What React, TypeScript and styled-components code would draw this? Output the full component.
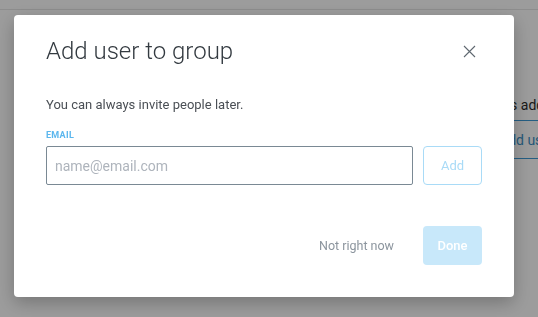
import styled, { createGlobalStyle } from 'styled-components';

const GlobalStyle = createGlobalStyle`
  html, body {
    margin: 0;
    padding: 0;
    background: #ffffff;
    font-family: 'Roboto', 'Noto Sans', sans-serif;
    overflow: hidden;
  }
  * {
    box-sizing: border-box;
  }
`;

function CloseIcon() {
  return (
    <svg width="13" height="13" viewBox="0 0 13 13" fill="none">
      <path d="M1 1L12 12M12 1L1 12" stroke="#5f6870" strokeWidth="1.1" />
    </svg>
  );
}

function App() {
  return (
    <>
      <GlobalStyle />
      <Page>
        <TopBar />
        <Content>
          <Summary>users added</Summary>
          <LinkRow>
            <TextLink>Add users</TextLink>
          </LinkRow>
        </Content>
      </Page>

      <Overlay>
        <Modal role="dialog" aria-labelledby="add-user-title">
          <Header>
            <Title id="add-user-title">Add user to group</Title>
            <CloseButton aria-label="Close">
              <CloseIcon />
            </CloseButton>
          </Header>

          <Hint>You can always invite people later.</Hint>

          <Field>
            <Label htmlFor="email">Email</Label>
            <InputRow>
              <EmailInput id="email" placeholder="name@email.com" />
              <OutlineButton disabled>Add</OutlineButton>
            </InputRow>
          </Field>

          <Footer>
            <GhostButton>Not right now</GhostButton>
            <PrimaryButton disabled>Done</PrimaryButton>
          </Footer>
        </Modal>
      </Overlay>
    </>
  );
}

export default App;

// styles
const Page = styled.div`
  width: 538px;
  height: 317px;
  background: #ffffff;
  overflow: hidden;
`;

const TopBar = styled.div`
  height: 10px;
  border-bottom: 1px solid #e6e6e6;
`;

const Content = styled.div`
  display: flex;
  flex-direction: column;
  padding: 86px 0 0 483px;
`;

const Summary = styled.div`
  font-size: 14px;
  line-height: 18px;
  color: #2c2c2c;
  white-space: nowrap;
  height: 25px;
  border-bottom: 1px solid #3d9ad6;
`;

const LinkRow = styled.div`
  display: flex;
  align-items: center;
  height: 38px;
  padding-left: 16px;
  border-bottom: 1px solid #3d9ad6;
`;

const TextLink = styled.span`
  font-size: 14px;
  color: #3d8fc4;
  white-space: nowrap;
`;

const Overlay = styled.div`
  position: fixed;
  inset: 0;
  background: rgba(0, 0, 0, 0.39);
  display: flex;
  align-items: flex-start;
  padding: 15px 0 0 14px;
`;

const Modal = styled.div`
  width: 500px;
  height: 282px;
  background: #ffffff;
  border-radius: 4px;
  box-shadow: 0 6px 18px rgba(0, 0, 0, 0.25);
  display: flex;
  flex-direction: column;
  padding: 20px 32px 0 32px;
`;

const Header = styled.div`
  display: flex;
  align-items: center;
  justify-content: space-between;
  height: 32px;
`;

const Title = styled.h2`
  margin: 0;
  font-size: 24px;
  font-weight: 300;
  color: #333a40;
`;

const CloseButton = styled.button`
  display: flex;
  align-items: center;
  justify-content: center;
  width: 24px;
  height: 24px;
  margin-right: 1px;
  padding: 0;
  border: none;
  background: none;
  cursor: pointer;
`;

const Hint = styled.p`
  margin: 29px 0 0 0;
  font-size: 13px;
  line-height: 18px;
  color: #4a4f55;
`;

const Field = styled.div`
  display: flex;
  flex-direction: column;
  margin-top: 16px;
  gap: 6px;
`;

const Label = styled.label`
  font-size: 9px;
  font-weight: 700;
  text-transform: uppercase;
  letter-spacing: 0.3px;
  color: #5bb7ee;
  line-height: 10px;
`;

const InputRow = styled.div`
  display: flex;
  gap: 10px;
`;

const EmailInput = styled.input`
  width: 367px;
  height: 39px;
  padding: 0 8px;
  border: 1px solid #7a8994;
  border-radius: 2px;
  font-family: inherit;
  font-size: 14px;
  color: #333;
  outline: none;
  caret-color: #333;

  &::placeholder {
    color: #aeb4bc;
  }
`;

const OutlineButton = styled.button`
  width: 59px;
  height: 39px;
  border: 1px solid #a9dbf7;
  border-radius: 4px;
  background: #ffffff;
  color: #a9dbf7;
  font-family: inherit;
  font-size: 13px;
  cursor: default;
`;

const Footer = styled.div`
  display: flex;
  justify-content: flex-end;
  align-items: center;
  gap: 21px;
  margin-top: 41px;
`;

const GhostButton = styled.button`
  border: none;
  background: none;
  padding: 0 8px;
  font-family: inherit;
  font-size: 12.5px;
  color: #8c959e;
  cursor: pointer;
`;

const PrimaryButton = styled.button`
  width: 59px;
  height: 39px;
  border: none;
  border-radius: 4px;
  background: #c8e8fa;
  color: #ffffff;
  font-family: inherit;
  font-size: 13px;
  font-weight: 500;
  cursor: default;
`;
